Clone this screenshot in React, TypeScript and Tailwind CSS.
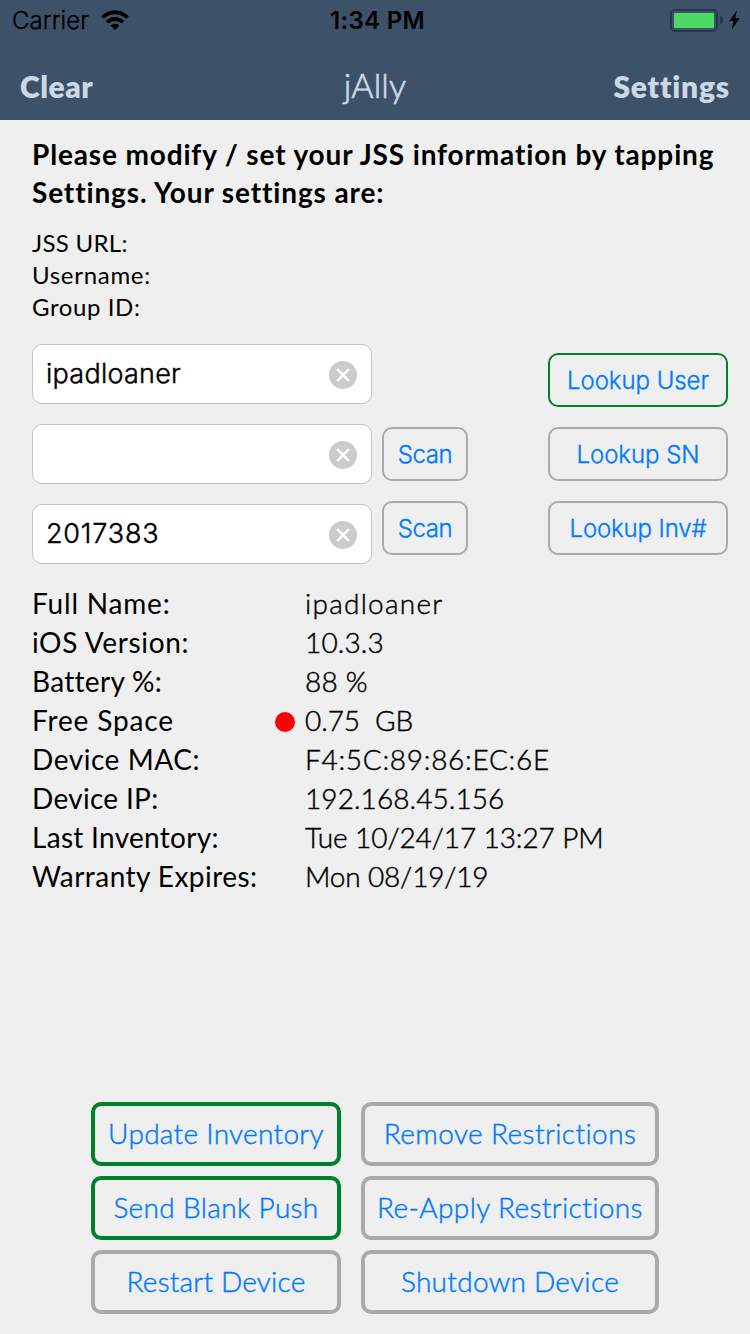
import React from "react";
import clsx from "clsx";

const lato = "font-['Lato','Noto_Sans',sans-serif]";
const inter = "font-['Inter','Liberation_Sans',sans-serif]";

function StatusBar() {
  return (
    <div className={clsx(inter, "grid h-10 grid-cols-3 items-center pr-[10px] pl-3 text-2xl leading-10 text-black")}>
      <div className="flex items-center gap-[12px]">
        <span className="pt-[2px] leading-[38px] font-light tracking-[0.05px] [-webkit-text-stroke:0.35px_currentColor]">Carrier</span>
        <svg width="28" height="20" viewBox="0 0 28 20" className="block">
          <path d="M0.2 6.2C7.6-1.8 20.4-1.8 27.8 6.2L25.2 8.8C19.2 2.6 8.8 2.6 2.8 8.8Z" />
          <path d="M4.9 10.9C9.9 5.6 18.1 5.6 23.1 10.9L20.4 13.6C16.9 10 11.1 10 7.6 13.6Z" />
          <path d="M9.6 15.6C12.1 13.1 15.9 13.1 18.4 15.6L14 20Z" />
        </svg>
      </div>
      <span className="pt-[2px] pl-[3px] text-center leading-[38px] font-semibold tracking-[0.3px]">1:34 PM</span>
      <div className="flex items-center justify-end gap-[6px]">
        <div className="flex items-center gap-[2px]">
          <div className="h-[23px] w-12 rounded-[5px] border-2 border-[#27374a] p-[2px]">
            <div className="h-full w-full rounded-[1px] bg-[#4cd964]" />
          </div>
          <div className="h-2 w-[3px] rounded-r-full bg-[#27374a]" />
        </div>
        <svg width="11" height="20" viewBox="0 0 12 20" preserveAspectRatio="none" className="block">
          <path d="M8.6 0.5L0.3 11H5L3 19.4L11.8 8.3H6.8Z" />
        </svg>
      </div>
    </div>
  );
}

function NavBar() {
  return (
    <div className="grid h-20 grid-cols-3 items-baseline px-5 pt-[11px] text-[30px] leading-[68px] font-extrabold">
      <span className="tracking-[0.5px]">Clear</span>
      <span className="text-center text-[34px] font-light tracking-[0.2px] [-webkit-text-stroke:0.7px_currentColor]">jAlly</span>
      <span className="text-right tracking-[0.8px]">Settings</span>
    </div>
  );
}

function ClearIcon() {
  return (
    <svg width="28" height="28" viewBox="0 0 28 28" className="block shrink-0">
      <circle cx="14" cy="14" r="14" fill="#cbcbcb" />
      <path d="M8.9 8.9L19.1 19.1M19.1 8.9L8.9 19.1" stroke="#fff" strokeWidth="2.6" strokeLinecap="round" />
    </svg>
  );
}

function Field({ text, tracking }: { text: string; tracking: string }) {
  return (
    <div className="flex h-[60px] w-[340px] items-center justify-between rounded-[10px] border border-[#c4c4c4] bg-white pr-[14px] pl-[13px] text-[27px] font-light [-webkit-text-stroke:0.45px_currentColor]">
      <span className={clsx("leading-[54px]", tracking)}>{text}</span>
      <div className="pt-[2px]">
        <ClearIcon />
      </div>
    </div>
  );
}

function SmallButton({ text, className }: { text: string; className: string }) {
  return (
    <button className={clsx("flex h-[54px] items-center justify-center rounded-[10px] border-2 pt-[2px] text-2xl font-light whitespace-nowrap text-[#007aff] [-webkit-text-stroke:0.35px_currentColor]", className)}>
      {text}
    </button>
  );
}

const details = [
  { label: "Full Name:", lt: "tracking-[0.8px]", value: "ipadloaner", vt: "tracking-[1.25px]" },
  { label: "iOS Version:", lt: "tracking-[0.65px]", value: "10.3.3", vt: "tracking-[0.15px]" },
  { label: "Battery %:", lt: "tracking-[0.3px]", value: "88 %", vt: "tracking-[0.2px]" },
  { label: "Free Space", lt: "tracking-[0.84px]", value: "0.75\u00a0 GB", vt: "tracking-[-0.07px]", alert: true },
  { label: "Device MAC:", lt: "tracking-[0.55px]", value: "F4:5C:89:86:EC:6E", vt: "tracking-[0.7px]" },
  { label: "Device IP:", lt: "tracking-[0.3px]", value: "192.168.45.156", vt: "tracking-[0.08px]" },
  { label: "Last Inventory:", lt: "tracking-[0.3px]", value: "Tue 10/24/17 13:27 PM", vt: "tracking-[-0.1px]" },
  { label: "Warranty Expires:", lt: "tracking-[0.45px]", value: "Mon 08/19/19", vt: "tracking-[-0.16px]" },
];

const actions = [
  { text: "Update Inventory", active: true, tracking: "tracking-[0.31px]" },
  { text: "Remove Restrictions", active: false, tracking: "tracking-[0.41px]" },
  { text: "Send Blank Push", active: true, tracking: "tracking-[0.35px]" },
  { text: "Re-Apply Restrictions", active: false, tracking: "tracking-[0.39px]" },
  { text: "Restart Device", active: false, tracking: "tracking-[0.2px]" },
  { text: "Shutdown Device", active: false, tracking: "tracking-[0.3px]" },
];

export default function App() {
  return (
    <div className={clsx(lato, "flex h-[1334px] w-[750px] flex-col overflow-hidden bg-[#efefef] text-black")}>
      <header className="h-[120px] shrink-0 bg-[#3d5269] text-[#cdd8e6]">
        <StatusBar />
        <NavBar />
      </header>

      <main className="flex flex-1 flex-col pt-[15px] pb-5">
        <h1 className="pl-8 text-[28px] leading-[38px] font-bold whitespace-nowrap">
          <span className="block tracking-[0.85px]">Please modify / set your JSS information by tapping</span>
          <span className="block tracking-[0.87px]">Settings. Your settings are:</span>
        </h1>

        <div className="mt-4 pl-8 text-2xl leading-8">
          <p className="tracking-[0.3px]">JSS URL:</p>
          <p className="tracking-[0.7px]">Username:</p>
          <p className="tracking-[0.6px]">Group ID:</p>
        </div>

        <div className={clsx(inter, "mt-[21px] flex h-[220px] pl-8")}>
          <div className="flex flex-col gap-5">
            <Field text="ipadloaner" tracking="tracking-[0.25px]" />
            <Field text="" tracking="tracking-normal" />
            <Field text="2017383" tracking="tracking-[0.8px]" />
          </div>
          <div className="ml-[10px] flex flex-col gap-5 pt-[83px]">
            <SmallButton text="Scan" className="w-[86px] border-[#aaaaaa] tracking-[-0.4px]" />
            <SmallButton text="Scan" className="w-[86px] border-[#aaaaaa] tracking-[-0.4px]" />
          </div>
          <div className="ml-20 flex flex-col gap-5 pt-[9px]">
            <SmallButton text="Lookup User" className="w-[180px] border-[#007f2d] tracking-[-0.05px]" />
            <SmallButton text="Lookup SN" className="w-[180px] border-[#aaaaaa] tracking-[-0.05px]" />
            <SmallButton text="Lookup Inv#" className="w-[180px] border-[#aaaaaa] tracking-[-0.15px]" />
          </div>
        </div>

        <dl className="mt-5 pl-8 text-[28px] leading-[39px] whitespace-nowrap">
          {details.map((d) => (
            <div key={d.label} className="flex h-[39px]">
              <dt className={clsx("w-[243px]", d.lt)}>{d.label}</dt>
              <dd className="flex">
                <span className="flex w-[30px] items-center">
                  {d.alert && <span className="mt-[2px] size-5 rounded-full bg-[#ff0000]" />}
                </span>
                <span className={clsx("font-light [-webkit-text-stroke:0.45px_currentColor]", d.vt)}>{d.value}</span>
              </dd>
            </div>
          ))}
        </dl>

        <div className="mt-auto ml-[91px] grid grid-cols-[250px_298px] gap-x-5 gap-y-[10px]">
          {actions.map((a) => (
            <button
              key={a.text}
              className={clsx(
                "flex h-16 items-center justify-center rounded-[10px] border-4 pb-[2px] text-[28px] font-light whitespace-nowrap text-[#007aff] [-webkit-text-stroke:0.45px_currentColor]",
                a.active ? "border-[#007f2d]" : "border-[#aaaaaa]",
                a.tracking,
              )}
            >
              {a.text}
            </button>
          ))}
        </div>
      </main>
    </div>
  );
}
